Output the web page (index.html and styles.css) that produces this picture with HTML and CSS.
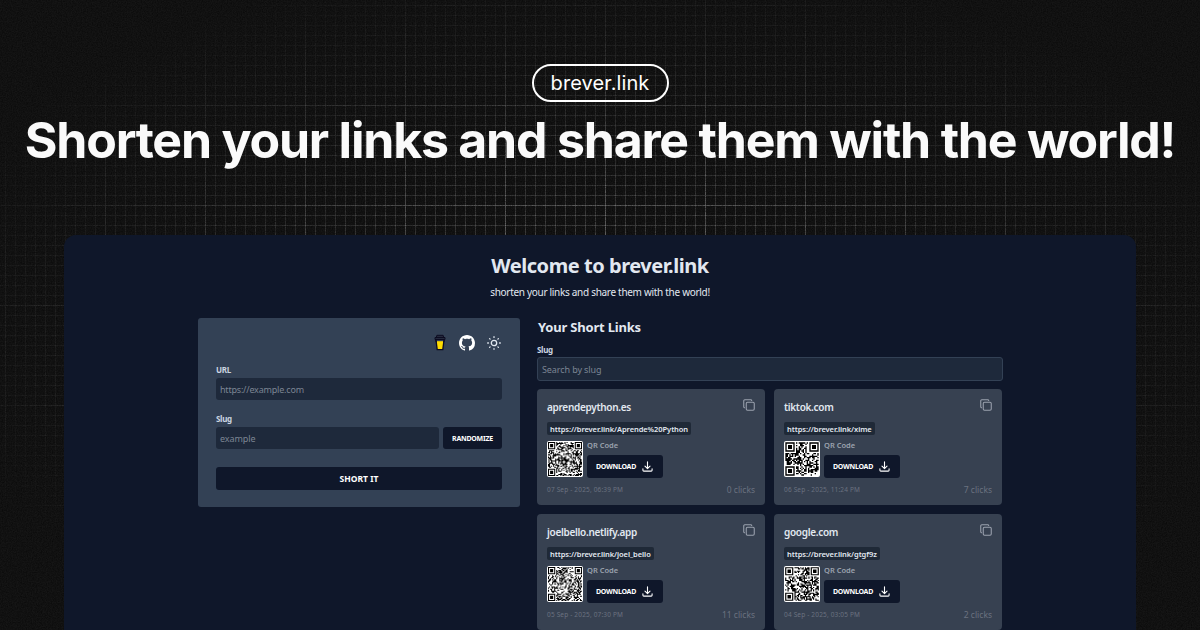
FILE: index.html
```html
<!DOCTYPE html>
<html lang="en">
<head>
<meta charset="utf-8">
<title>brever.link</title>
<link rel="stylesheet" href="styles.css">
</head>
<body>
<svg class="defs" aria-hidden="true">
  <symbol id="copy" viewBox="0 0 24 24" fill="none" stroke="currentColor" stroke-width="2.100" stroke-linecap="round" stroke-linejoin="round"><rect x="6.5" y="6.5" width="16" height="16" rx="2.5"/><path d="M3 17.5a2 2 0 0 1-1.500-2V3.500a2 2 0 0 1 2-2h12a2 2 0 0 1 2 1.500"/></symbol>
  <symbol id="down" viewBox="0 0 24 24" fill="none" stroke="currentColor" stroke-width="2.400" stroke-linecap="round" stroke-linejoin="round"><path d="M2 17v3a2 2 0 0 0 2 2h16a2 2 0 0 0 2-2v-3M6.500 11l5.500 5.500 5.500-5.500M12 16V2"/></symbol>
</svg>
<div class="backdrop">
  <div class="grid"></div>
  <svg class="grain" width="1200" height="630" aria-hidden="true"><filter id="noise"><feTurbulence type="fractalNoise" baseFrequency="0.8" numOctaves="3" seed="4"/><feColorMatrix values="0 0 0 0 0  0 0 0 0 0  0 0 0 0 0  1.6 0 0 0 -0.5"/></filter><rect width="1200" height="630" filter="url(#noise)"/></svg>
</div>
<main class="page">
  <div class="pill">brever.link</div>
  <h1 class="headline">Shorten your links and share them with the world!</h1>
  <section class="app">
    <h2 class="welcome">Welcome to brever.link</h2>
    <p class="tagline">shorten your links and share them with the world!</p>
    <div class="columns">
      <form class="form">
        <div class="tools">
          <svg width="12" height="17" viewBox="0 0 12 17"><path d="M2 6l1.200 9.600h5.600L10 6z" fill="#ffdd00" stroke="#0d0c22" stroke-width="1.300"/><path d="M2 5h8v2.200H2z" fill="#334155"/><path d="M1 3.500h10v2H1zM2.300 3.500l.6-2.200h6.200l.6 2.200z" fill="#252a3d" stroke="#0d0c22" stroke-width="1"/><path d="M2 6l.3 2M10 6l-.3 2" stroke="#0d0c22" stroke-width="1.300"/></svg>
          <svg width="16" height="16" viewBox="0 0 16 16" fill="#fff"><path d="M8 0C3.580 0 0 3.580 0 8c0 3.540 2.290 6.530 5.470 7.590.4.07.55-.17.55-.38 0-.19-.01-.82-.01-1.490-2.010.37-2.530-.49-2.690-.94-.09-.23-.48-.94-.82-1.130-.28-.15-.68-.52-.01-.53.63-.01 1.080.58 1.230.82.72 1.210 1.870.87 2.330.66.07-.52.28-.87.51-1.070-1.780-.2-3.640-.89-3.640-3.950 0-.87.31-1.590.82-2.150-.08-.2-.36-1.020.08-2.120 0 0 .67-.21 2.200.82.64-.18 1.320-.27 2-.27s1.360.09 2 .27c1.530-1.040 2.200-.82 2.200-.82.44 1.100.16 1.920.08 2.120.51.56.82 1.270.82 2.150 0 3.070-1.870 3.750-3.650 3.950.29.25.54.73.54 1.480 0 1.070-.01 1.930-.01 2.200 0 .21.15.46.55.38A8.010 8.010 0 0 0 16 8c0-4.420-3.580-8-8-8z"/></svg>
          <svg width="14" height="14" viewBox="0 0 14 14" fill="none" stroke="#e2e8f0" stroke-width="1.300" stroke-linecap="round"><circle cx="7" cy="7" r="2.700"/><path d="M7 .7v.7M7 12.600v.7M.7 7h.7M12.600 7h.7M2.600 2.600l.5.5M10.900 10.900l.5.5M2.600 11.400l.5-.5M10.900 3.100l.5-.5"/></svg>
        </div>
        <label class="label">URL</label>
        <div class="field"><span class="f-url">https://example.com</span></div>
        <label class="label second">Slug</label>
        <div class="row"><div class="field grow"><span class="f-ex">example</span></div><div class="btn rand"><span>RANDOMIZE</span></div></div>
        <div class="btn submit"><span>SHORT IT</span></div>
      </form>
      <section class="links">
        <h3 class="links-title">Your Short Links</h3>
        <label class="label">Slug</label>
        <div class="field search"><span class="f-search">Search by slug</span></div>
        <div class="cards">
          <article class="card">
            <header><h4>aprendepython.es</h4><svg class="copy"><use href="#copy"/></svg></header>
            <div class="chip">https://brever.link/Aprende%20Python</div>
            <div class="qrrow"><svg class="qr" data-seed="11" data-n="33"></svg><div><div class="qrlabel">QR Code</div><div class="btn dl"><span>DOWNLOAD</span><svg><use href="#down"/></svg></div></div></div>
            <footer><span class="date">07 Sep - 2025, 06:39 PM</span><span class="clicks">0 clicks</span></footer>
          </article>
          <article class="card">
            <header><h4>tiktok.com</h4><svg class="copy"><use href="#copy"/></svg></header>
            <div class="chip">https://brever.link/xime</div>
            <div class="qrrow"><svg class="qr" data-seed="23" data-n="25"></svg><div><div class="qrlabel">QR Code</div><div class="btn dl"><span>DOWNLOAD</span><svg><use href="#down"/></svg></div></div></div>
            <footer><span class="date">06 Sep - 2025, 11:24 PM</span><span class="clicks">7 clicks</span></footer>
          </article>
          <article class="card">
            <header><h4>joelbello.netlify.app</h4><svg class="copy"><use href="#copy"/></svg></header>
            <div class="chip">https://brever.link/joel_bello</div>
            <div class="qrrow"><svg class="qr" data-seed="37" data-n="33"></svg><div><div class="qrlabel">QR Code</div><div class="btn dl"><span>DOWNLOAD</span><svg><use href="#down"/></svg></div></div></div>
            <footer><span class="date">05 Sep - 2025, 07:30 PM</span><span class="clicks">11 clicks</span></footer>
          </article>
          <article class="card">
            <header><h4>google.com</h4><svg class="copy"><use href="#copy"/></svg></header>
            <div class="chip">https://brever.link/gtgf9z</div>
            <div class="qrrow"><svg class="qr" data-seed="53" data-n="29"></svg><div><div class="qrlabel">QR Code</div><div class="btn dl"><span>DOWNLOAD</span><svg><use href="#down"/></svg></div></div></div>
            <footer><span class="date">04 Sep - 2025, 03:05 PM</span><span class="clicks">2 clicks</span></footer>
          </article>
        </div>
      </section>
    </div>
  </section>
</main>
<script src="qr.js"></script>
</body>
</html>
```

FILE: qr.js
```js
// Fills each .qr svg with a seeded module pattern and three finder squares.
document.querySelectorAll('.qr').forEach(function (svg) {
  var n = +svg.dataset.n, s = +svg.dataset.seed, d = '';
  function rnd() { s = (s * 1103515245 + 12345) % 2147483648; return s / 2147483648; }
  function finder(x, y) {
    var cs = [[0, 0], [n - 7, 0], [0, n - 7]];
    for (var i = 0; i < 3; i++) {
      var a = x - cs[i][0], b = y - cs[i][1];
      if (a >= -1 && a <= 7 && b >= -1 && b <= 7) {
        var r = Math.max(Math.abs(a - 3), Math.abs(b - 3));
        return r === 3 || r <= 1 ? 1 : 0;
      }
    }
    return -1;
  }
  for (var y = 0; y < n; y++) for (var x = 0; x < n; x++) {
    var f = finder(x, y), on = rnd() < 0.5;
    if (f === 1 || (f < 0 && on)) d += 'M' + x + ' ' + y + 'h1v1h-1z';
  }
  svg.setAttribute('viewBox', '-1 -1 ' + (n + 2) + ' ' + (n + 2));
  svg.innerHTML = '<path d="' + d + '"/>';
});
```

FILE: styles.css
```css
* { box-sizing: border-box; margin: 0; padding: 0; }
body { width: 1200px; height: 630px; overflow: hidden; background: #151515; font-family: "Noto Sans", "Open Sans", sans-serif; color: #e2e8f0; }
.defs { position: absolute; width: 0; height: 0; }
.backdrop { position: absolute; width: 1200px; height: 630px; }
.grid { position: absolute; inset: 0;
  background:
    linear-gradient(90deg, rgba(255,255,255,.25) 1px, transparent 1px) 5px 5px / 100px 100px,
    linear-gradient(rgba(255,255,255,.25) 1px, transparent 1px) 5px 5px / 100px 100px,
    linear-gradient(90deg, rgba(255,255,255,.24) 1px, transparent 1px) 5px 5px / 10px 10px,
    linear-gradient(rgba(255,255,255,.24) 1px, transparent 1px) 5px 5px / 10px 10px;
  -webkit-mask-image: radial-gradient(ellipse 700px 370px at 600px 315px, #000, transparent);
  mask-image: radial-gradient(ellipse 700px 370px at 600px 315px, #000, transparent); }
.grain { position: absolute; inset: 0; opacity: .55; }
.page { position: relative; display: flex; flex-direction: column; align-items: center; padding-top: 64px; height: 630px; }
.pill { width: 137px; height: 38px; border: 2px solid #fff; border-radius: 19px; font: 400 20px/35px Inter, sans-serif; letter-spacing: .1px; color: #fff; text-align: center; }
.headline { margin-top: 8px; height: 60px; font: 700 50px/60px Inter, sans-serif; letter-spacing: -1.22px; color: #fafafa; white-space: nowrap; }
.app { margin-top: 65px; width: 1072px; height: 395px; flex: none; background: #0f172a; border-radius: 12px 12px 0 0; overflow: hidden; }
.welcome { margin-top: 17px; font-size: 20px; line-height: 28px; font-weight: 700; text-align: center; letter-spacing: -.45px; }
.tagline { margin-top: 4px; font-size: 10px; line-height: 16px; text-align: center; letter-spacing: -.3px; white-space: nowrap; }
.columns { display: flex; align-items: flex-start; gap: 17px; padding: 18px 133px 0 134px; }
.form { width: 322px; height: 189px; padding: 16px 18px; background: #334155; border-radius: 3px; }
.tools { display: flex; justify-content: flex-end; align-items: center; gap: 12px; height: 17px; padding-right: 1px; }
.tools svg:first-child { margin-right: 1px; }
.label { display: block; height: 12px; margin-top: 13px; font-size: 8px; line-height: 12px; font-weight: 700; letter-spacing: -.3px; color: #cbd5e1; }
.field { display: flex; align-items: center; height: 22px; margin-top: 2px; padding: 0 4px; background: #1e293b; border-radius: 3px; font-size: 9px; letter-spacing: -.1px; color: #7c8593; white-space: nowrap; }
.f-url { letter-spacing: -.2px; }
.row { display: flex; gap: 4px; }
.grow { flex: 1; }
.btn { display: flex; justify-content: center; align-items: center; background: #0f172a; border-radius: 3px; color: #fff; font-weight: 700; white-space: nowrap; }
.rand { width: 59px; height: 22px; margin-top: 2px; font-size: 7px; letter-spacing: -.25px; }
.submit { height: 23px; margin-top: 18px; font-size: 8.500px; }
.links { width: 466px; }
.links-title { height: 20px; font-size: 13px; line-height: 19px; font-weight: 700; letter-spacing: -.2px; padding-left: 1px; }
.links .label { margin-top: 6px; }
.search { height: 24px; margin-top: 1px; border: 1px solid #334155; }
.cards { display: grid; grid-template-columns: 228px 228px; gap: 9px; margin-top: 8px; }
.card { height: 116px; padding: 9px 10px; background: #374151; border-radius: 4px; }
.card header { display: flex; justify-content: space-between; height: 18px; }
.card h4 { font-size: 10px; line-height: 19px; font-weight: 600; letter-spacing: -.3px; }
.copy { width: 12px; height: 12px; margin-top: 1px; color: #9ca3af; }
.chip { width: fit-content; height: 13px; margin-top: 6px; padding: 0 3px; background: #1f2937; border-radius: 2px; font-size: 7.500px; line-height: 14px; font-weight: 600; letter-spacing: -.07px; white-space: nowrap; }
.qrrow { display: flex; gap: 4px; margin-top: 6px; height: 37px; }
.qr { width: 36px; height: 36px; background: #fff; border-radius: 2px; }
.qrlabel { height: 14px; font-size: 7.500px; line-height: 9px; font-weight: 600; color: #9ca3af; }
.dl { width: 76px; height: 23px; gap: 6px; font-size: 7px; letter-spacing: -.25px; padding-right: 1px; }
.dl svg { width: 11px; height: 11px; }
.card footer { display: flex; justify-content: space-between; align-items: center; margin-top: 5px; height: 13px; color: #6b7280; white-space: nowrap; }
.date { font-size: 6.500px; letter-spacing: .17px; }
.clicks { font-size: 8.500px; }
```
